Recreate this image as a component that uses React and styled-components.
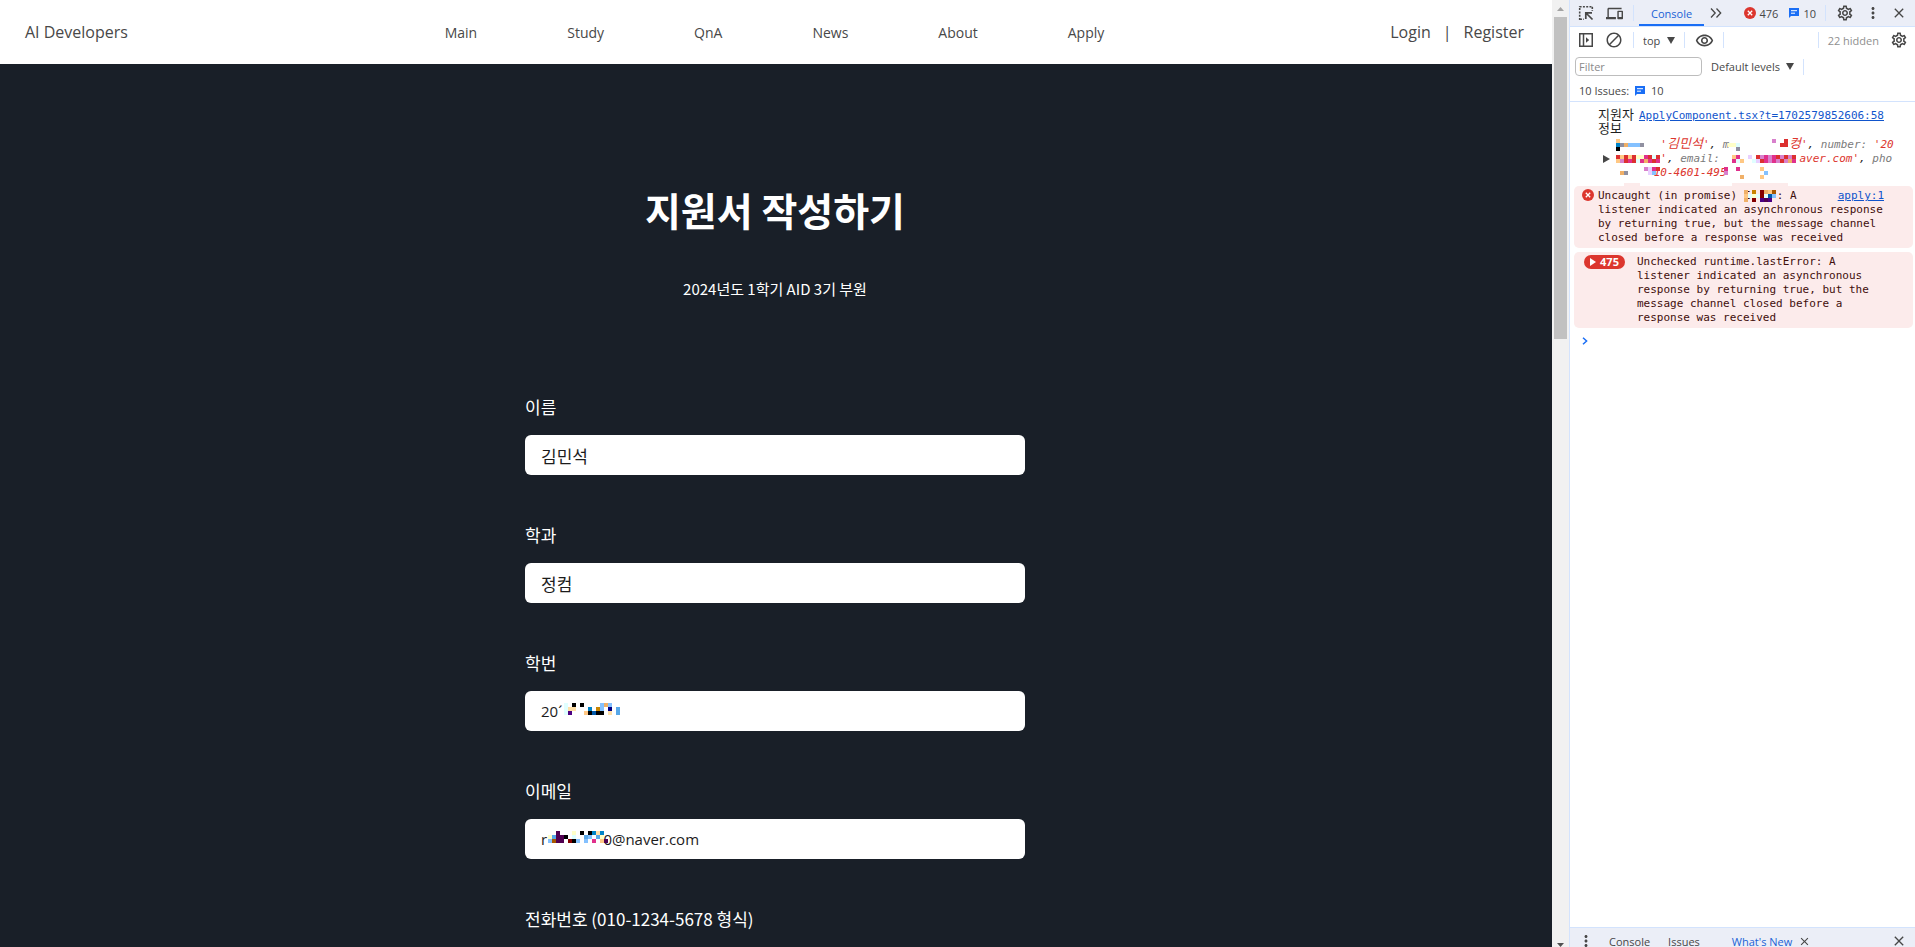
import React, {useState} from 'react';
import styled, {createGlobalStyle} from 'styled-components'
import {MdBlock, MdClose, MdDevices, MdMoreVert, MdOutlineRemoveRedEye, MdOutlineSettings} from 'react-icons/md'


const GlobalStyle = createGlobalStyle`
  * {
    box-sizing: border-box;
  }

  body {
    margin: 0;
    font-family: "Open Sans", "Noto Sans CJK KR", sans-serif;
  }

  button, input, select {
    font: inherit;
    color: inherit;
    border: 0;
    padding: 0;
    background: none;
  }
`

const Screen = styled.div`
  display: flex;
  height: 100vh;
  overflow: hidden;
`

/* ---------- site ---------- */

const Page = styled.div`
  flex: 1;
  min-width: 0;
  overflow: hidden;
  background-color: #191f28;
`

const Header = styled.header`
  display: grid;
  grid-template-columns: 1fr auto 1fr;
  align-items: center;
  height: 64px;
  padding: 0 28px 0 25px;
  background-color: #fff;
  color: #484848;
`

const Brand = styled.a`
  color: inherit;
  font-size: 16px;
  text-decoration: none;
`

const Nav = styled.nav`
  display: flex;
  gap: 90px;
`

const NavLink = styled.a`
  color: inherit;
  font-size: 14px;
  text-decoration: none;
`

const Auth = styled.div`
  display: flex;
  justify-content: flex-end;
  gap: 12px;
  font-size: 16px;

  a {
    color: inherit;
    text-decoration: none;
  }
`

const Apply = styled.main`
  display: flex;
  flex-direction: column;
  align-items: center;
  padding: 117px 2px 0 0;
  color: #fff;
  font-family: "Noto Sans CJK KR", sans-serif;
`

const Title = styled.h1`
  margin: 0;
  font-size: 39px;
  line-height: 56px;
`

const Subtitle = styled.p`
  margin: 42px 0 96px;
  font-size: 15px;
  line-height: 20px;
`

const Form = styled.form`
  display: flex;
  flex-direction: column;
  gap: 48px;
  width: 500px;
  max-width: 100%;
`

const Field = styled.div`
  display: flex;
  flex-direction: column;
  gap: 16px;
`

const FieldLabel = styled.label`
  font-size: 17px;
  line-height: 24px;
`

const InputWrap = styled.div`
  position: relative;
`

const TextInput = styled.input`
  display: block;
  width: 100%;
  height: 40px;
  padding: 0 16px;
  border-radius: 6px;
  background-color: #fff;
  color: #1c1c1c;
  font-family: ${props => props.$latin ? '"Open Sans", sans-serif' : 'inherit'};
  font-size: ${props => props.$latin ? '15px' : '17px'};
`

/* ---------- scrollbar ---------- */

const Scrollbar = styled.div`
  display: flex;
  flex-direction: column;
  align-items: center;
  width: 17px;
  background-color: #f1f1f1;

  svg {
    display: block;
  }
`

const Thumb = styled.div`
  width: 13px;
  height: 34%;
  margin-bottom: auto;
  background-color: #c1c1c1;
`

/* ---------- devtools ---------- */

const DevTools = styled.aside`
  display: flex;
  flex-direction: column;
  width: 346px;
  border-left: 1px solid #d3e3fd;
  background-color: #fff;
  color: #474747;
  font-size: 11px;
`

const Bar = styled.div`
  display: flex;
  flex-shrink: 0;
  align-items: center;
  height: ${props => props.$height || 26}px;
  padding: 0 2px;
`

const TabBar = styled(Bar)`
  padding-right: 4px;
  background-color: #ebeef7;
  border-bottom: 1px solid #d3e3fd;
`

const IssuesBar = styled(Bar)`
  gap: 6px;
  padding: 0 9px;
  border-bottom: 1px solid #d3e3fd;
`

const IconButton = styled.button`
  display: flex;
  align-items: center;
  justify-content: center;
  width: ${props => props.$narrow ? 24 : 28}px;
  height: 24px;
  color: #474747;
`

const Tab = styled.button`
  align-self: stretch;
  padding: 0 12px;
  color: ${props => props.$active ? '#1a62d6' : 'inherit'};
  box-shadow: ${props => props.$underline ? 'inset 0 -2px #1a6ef5' : 'none'};
`

const Separator = styled.span`
  width: 1px;
  height: 16px;
  margin: 0 5px;
  background-color: #d3e3fd;
`

const Spacer = styled.span`
  flex: 1;
`

const Count = styled.button`
  display: flex;
  align-items: center;
  gap: 4px;
  margin: 0 4px 0 7px;
`

const DropDown = styled.label`
  display: flex;
  align-items: center;
  gap: 6px;
  padding: 0 4px;

  select {
    appearance: none;
  }
`

const FilterInput = styled.input`
  width: 127px;
  height: 19px;
  margin: 0 5px 0 3px;
  padding: 0 3px;
  border: 1px solid #bdbdbd;
  border-radius: 4px;

  &::placeholder {
    color: #8a8a8a;
    opacity: 1;
  }
`

const Hidden = styled.span`
  margin: 0 6px 0 4px;
  color: #8f8f8f;
`

const Log = styled.div`
  display: flex;
  flex: 1;
  flex-direction: column;
  gap: 4px;
  min-height: 0;
  padding: 5px 2px 0 4px;
  overflow: hidden;
  font-family: "DejaVu Sans Mono", "Noto Sans CJK KR", monospace;
  line-height: 14px;
`

const Entry = styled.div`
  position: relative;
  padding: ${props => props.$error ? '3px 29px 3px 24px' : '2px 29px 0 24px'};
  border-radius: 5px;
  background-color: ${props => props.$error ? '#fcebeb' : 'transparent'};
  color: ${props => props.$error ? '#410e0b' : '#1f1f1f'};
`

const GroupedEntry = styled(Entry)`
  display: flex;
  gap: 12px;
  padding-left: 10px;
`

const Source = styled.a`
  float: right;
  color: #1155cc;
`

const EntryIcon = styled.span`
  position: absolute;
  left: 8px;
  top: 3px;
`

const Korean = styled.span`
  font-size: 13px;
  line-height: 0;
`

const ObjectPreview = styled.div`
  position: relative;
  margin: 1px -16px 2px 16px;
  white-space: pre;
  font-style: italic;
  color: #1f1f1f;
`

const PreviewLine = styled.div`
  height: 14px;
`

const Expander = styled.button`
  position: absolute;
  left: -11px;
  top: 17px;
  height: 8px;

  svg {
    display: block;
  }
`

const Key = styled.span`
  color: #7a7a7a;
`

const Str = styled.span`
  color: #dc362e;
`

const Badge = styled.span`
  display: flex;
  flex-shrink: 0;
  align-items: center;
  justify-content: center;
  gap: 4px;
  width: 41px;
  height: 14px;
  border-radius: 7px;
  background-color: #dc362e;
  color: #fff;
  font-family: "Open Sans", sans-serif;
  font-weight: 700;
`

const Prompt = styled.div`
  padding: 5px 8px;

  svg {
    display: block;
  }
`

const Drawer = styled.div`
  height: 20px;
  flex-shrink: 0;
  overflow: hidden;
  border-top: 1px solid #d3e3fd;
  background-color: #ebeef7;
`

const DrawerTab = styled(Tab)`
  padding: 0 9px;

  &:nth-of-type(4) {
    margin-left: 14px;
    padding-right: 0;
  }
`

const MosaicSvg = styled.svg`
  position: absolute;
  left: ${props => props.$left}px;
  top: ${props => props.$top}px;
  pointer-events: none;
`

const palette = {
    k: '#000000', w: '#e0ffff', b: '#84c1ff', B: '#0084c8', n: '#000084',
    s: '#58a8e8', p: '#500050', y: '#ffffc8', t: '#ffe0a8', o: '#ffc884',
    r: '#dc3030', m: '#e0308c', M: '#d880cc', v: '#4b0082', g: '#9090a0',
    l: '#e8d0ff', a: '#0058a8', q: '#c88400', d: '#840000', c: '#a85800',
    f: '#f0b068', e: '#fcebeb',
}

const numberCells = [
    'w k k    bfb',
    'wtt   B qb n s',
    'wv   okakk t s',
]

const mailCells = [
    '  p   y k kBtB',
    'ysppk w  sb sy',
    'bcpp dkb b m op',
]

const objectCells = [
    'o                                      M  r',
    'Bgfbbbg                     yyw          rr',
    'k                             g',
    '',
    'rororyymrwr                  om  l rMmMmrMrMr',
    'oMrmrwmfmrm                  mwo  wlrmMmMrMfm',
    '',
    '       Mlmr                m  m     o',
    ' fg     lb                 M         b',
    '                               f    o',
    '',
    '  eeee                       eeeeeeeeeeeeee',
]

const errorCells = [
    'f q dfoc',
    'owywdwab',
    'f d vpv',
]

// censored bits, one letter of the palette for each 4px cell
function Mosaic({cells, left, top}) {
    const width = Math.max(...cells.map(row => row.length)) * 4
    return (
        <MosaicSvg $left={left} $top={top} width={width} height={cells.length * 4} shapeRendering="crispEdges" aria-hidden="true">
            {cells.map((row, y) => row.split('').map((cell, x) => (
                palette[cell] && <rect key={`${x}-${y}`} x={x * 4} y={y * 4} width="4" height="4" fill={palette[cell]} />
            )))}
        </MosaicSvg>
    )
}

const InspectIcon = () => (
    <svg width="16" height="16" viewBox="0 0 16 16" fill="none" stroke="#474747">
        <path d="M1.7 15V1.7H15" strokeWidth="1.6" strokeDasharray="2 1.3" />
        <path d="M14.3 2v4M2 14.3h4" strokeWidth="1.6" strokeDasharray="2 1.3" />
        <path d="M7.8 14V7.8H14M8 8l6.5 6.5" strokeWidth="1.7" />
    </svg>
)

const SidebarIcon = () => (
    <svg width="16" height="16" viewBox="0 0 16 16" fill="none" stroke="#474747" strokeWidth="1.5">
        <path d="M1.75 1.75h12.5v12.5H1.75zM5.5 2v12" />
        <path d="M8 5.2v5.6L11.2 8z" fill="#474747" stroke="none" />
    </svg>
)

const MoreTabsIcon = () => (
    <svg width="12" height="12" viewBox="0 0 12 12" fill="none" stroke="#474747" strokeWidth="1.3">
        <path d="M1 1.5L5.2 6 1 10.5M6.5 1.5L10.7 6l-4.2 4.5" />
    </svg>
)

const ErrorIcon = () => (
    <svg width="12" height="12" viewBox="0 0 12 12" display="block">
        <circle cx="6" cy="6" r="6" fill="#dc362e" />
        <path d="M3.8 3.8l4.4 4.4M8.2 3.8L3.8 8.2" stroke="#fff" strokeWidth="1.3" />
    </svg>
)

const MessageIcon = () => (
    <svg width="10" height="10" viewBox="0 0 10 10">
        <path d="M0 0h10v8H2L0 10z" fill="#1a6ef5" />
        <path d="M2 2.7h6M2 5.2h4" stroke="#fff" strokeWidth="1" />
    </svg>
)

const ArrowDown = () => (
    <svg width="8" height="7" viewBox="0 0 8 7">
        <path d="M0 0h8L4 7z" fill="#474747" />
    </svg>
)

const menu = ['Main', 'Study', 'QnA', 'News', 'About', 'Apply']

const fields = [
    {id: 'name', label: '이름', value: '김민석'},
    {id: 'major', label: '학과', value: '정컴'},
    {id: 'number', label: '학번', value: '20´', latin: true, mosaic: <Mosaic cells={numberCells} left={39} top={12} />},
    {id: 'email', label: '이메일', value: 'r\u2003\u2003\u2003\u2002\u20050@naver.com', latin: true, mosaic: <Mosaic cells={mailCells} left={23} top={12} />},
    {id: 'phone', label: '전화번호 (010-1234-5678 형식)', value: ''},
]

function ApplyPage() {
    const [values, setValues] = useState(Object.fromEntries(fields.map(field => [field.id, field.value])));

    return (
        <Page>
            <Header>
                <div><Brand href="#">AI Developers</Brand></div>
                <Nav>
                    {menu.map(item => <NavLink key={item} href={`#${item}`}>{item}</NavLink>)}
                </Nav>
                <Auth>
                    <a href="#login">Login</a>
                    <span>|</span>
                    <a href="#register">Register</a>
                </Auth>
            </Header>
            <Apply>
                <Title>지원서 작성하기</Title>
                <Subtitle>2024년도 1학기 AID 3기 부원</Subtitle>
                <Form>
                    {fields.map(field => (
                        <Field key={field.id}>
                            <FieldLabel htmlFor={field.id}>{field.label}</FieldLabel>
                            <InputWrap>
                                <TextInput
                                    id={field.id}
                                    $latin={field.latin}
                                    value={values[field.id]}
                                    onChange={e => setValues({...values, [field.id]: e.target.value})}
                                />
                                {field.mosaic}
                            </InputWrap>
                        </Field>
                    ))}
                </Form>
            </Apply>
        </Page>
    )
}

function ConsoleLog() {
    return (
        <Log>
            <Entry>
                <Source href="#source">ApplyComponent.tsx?t=1702579852606:58</Source>
                <Korean>지원자 정보</Korean>
                <ObjectPreview>
                    <Expander aria-label="Expand">
                        <svg width="7" height="8" viewBox="0 0 7 8"><path d="M0 0v8l7-4z" fill="#474747" /></svg>
                    </Expander>
                    <PreviewLine>{'       '}<Str>'<Korean>김민석</Korean>'</Str>, <Key>m</Key>{'         '}<Str><Korean>컹</Korean>'</Str>, <Key>number:</Key> <Str>'20</Str></PreviewLine>
                    <PreviewLine>{'       '}<Str>'</Str>, <Key>email:</Key>{'            '}<Str>aver.com'</Str>, <Key>pho</Key></PreviewLine>
                    <PreviewLine>{'      '}<Str>10-4601-495</Str></PreviewLine>
                    <Mosaic cells={objectCells} left={2} top={1} />
                </ObjectPreview>
            </Entry>
            <Entry $error>
                <EntryIcon><ErrorIcon /></EntryIcon>
                <Source href="#apply">apply:1</Source>
                Uncaught (in promise) E{'\u00a0\u00a0\u00a0\u00a0'}: A listener indicated an asynchronous response by returning true, but the message channel closed before a response was received
                <Mosaic cells={errorCells} left={170} top={4} />
            </Entry>
            <GroupedEntry $error>
                <Badge>
                    <svg width="6" height="8" viewBox="0 0 6 8"><path d="M0 0v8l6-4z" fill="#fff" /></svg>
                    475
                </Badge>
                <span>Unchecked runtime.lastError: A listener indicated an asynchronous response by returning true, but the message channel closed before a response was received</span>
            </GroupedEntry>
            <Prompt>
                <svg width="6" height="8" viewBox="0 0 6 8" fill="none" stroke="#1a6ef5" strokeWidth="1.5"><path d="M1 .7L4.6 4 1 7.3" /></svg>
            </Prompt>
        </Log>
    )
}

export default function App() {
    return (
        <Screen>
            <GlobalStyle />
            <ApplyPage />
            <Scrollbar>
                <svg width="17" height="17" viewBox="0 0 17 17"><path d="M5 11h7L8.500 7z" fill="#a3a3a3" /></svg>
                <Thumb />
                <svg width="17" height="4" viewBox="0 0 17 4"><path d="M5 0h7L8.500 4z" fill="#505050" /></svg>
            </Scrollbar>
            <DevTools>
                <TabBar $height={27}>
                    <IconButton aria-label="Inspect"><InspectIcon /></IconButton>
                    <IconButton aria-label="Devices"><MdDevices size={17} /></IconButton>
                    <Separator />
                    <Tab $active $underline>Console</Tab>
                    <IconButton $narrow aria-label="More tabs"><MoreTabsIcon /></IconButton>
                    <Spacer />
                    <Count><ErrorIcon />476</Count>
                    <Count><MessageIcon />10</Count>
                    <Separator />
                    <IconButton aria-label="Settings"><MdOutlineSettings size={18} /></IconButton>
                    <IconButton aria-label="Menu"><MdMoreVert size={18} /></IconButton>
                    <IconButton $narrow aria-label="Close"><MdClose size={16} /></IconButton>
                </TabBar>
                <Bar>
                    <IconButton aria-label="Sidebar"><SidebarIcon /></IconButton>
                    <IconButton aria-label="Clear"><MdBlock size={18} /></IconButton>
                    <Separator />
                    <DropDown>
                        <select aria-label="Context"><option>top</option></select>
                        <ArrowDown />
                    </DropDown>
                    <Separator />
                    <IconButton aria-label="Live expression"><MdOutlineRemoveRedEye size={19} /></IconButton>
                    <Separator />
                    <Spacer />
                    <Separator />
                    <Hidden>22 hidden</Hidden>
                    <IconButton aria-label="Console settings"><MdOutlineSettings size={18} /></IconButton>
                </Bar>
                <Bar $height={27}>
                    <FilterInput aria-label="Filter" placeholder="Filter" />
                    <DropDown>
                        <select aria-label="Log levels"><option>Default levels</option></select>
                        <ArrowDown />
                    </DropDown>
                    <Separator />
                </Bar>
                <IssuesBar $height={22}>
                    <span>10 Issues:</span>
                    <MessageIcon />
                    <span>10</span>
                </IssuesBar>
                <ConsoleLog />
                <Drawer>
                    <Bar>
                        <IconButton aria-label="More tools"><MdMoreVert size={18} /></IconButton>
                        <DrawerTab>Console</DrawerTab>
                        <DrawerTab>Issues</DrawerTab>
                        <DrawerTab $active>What's New</DrawerTab>
                        <IconButton $narrow aria-label="Close tab"><MdClose size={13} /></IconButton>
                        <Spacer />
                        <IconButton aria-label="Close drawer"><MdClose size={16} /></IconButton>
                    </Bar>
                </Drawer>
            </DevTools>
        </Screen>
    );
}
